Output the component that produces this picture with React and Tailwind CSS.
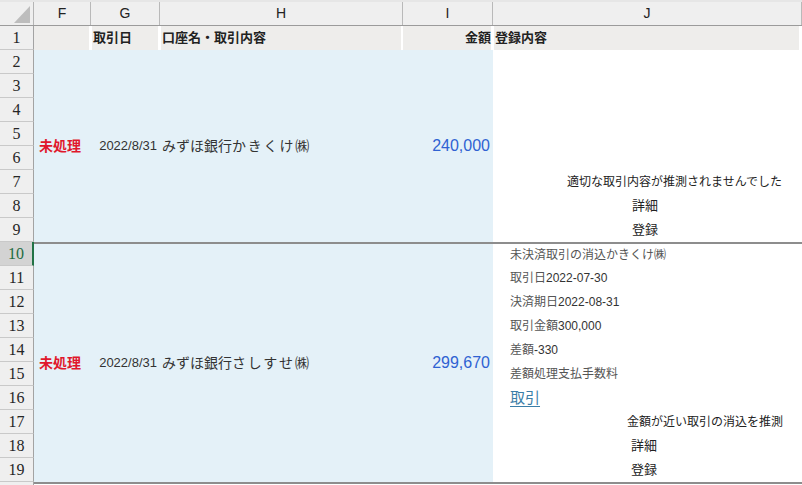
import React from 'react';

const sans = { fontFamily: '"Liberation Sans", "Noto Sans CJK JP", sans-serif' };
const serif = { fontFamily: '"Liberation Serif", "Noto Serif CJK JP", serif' };

const rowNums = Array.from({ length: 20 }, (_, i) => i + 1);

function RowHeader({ n }) {
    const active = n === 10;
    return (
        <div
            style={serif}
            className={
                "h-6 w-[34px] shrink-0 flex items-center justify-center border-b border-b-[#c9c9c9] text-[16px] leading-none " +
                (active
                    ? "bg-[#d3d3d3] text-[#1d6b41] border-r-2 border-r-[#217346]"
                    : "bg-[#efefef] text-[#262626] border-r border-r-[#a3a3a3]")
            }
        >
            {n < 20 ? n : ""}
        </div>
    );
}

function Record({ name, kana, amount, bordered, children }) {
    return (
        <div
            className={
                "flex " +
                (bordered ? "h-[242px] border-y-2 border-[#8d8d8d]" : "h-[192px]")
            }
        >
            <div className="flex w-[459px] bg-[#e4f1f8] items-center">
                <div className="w-[57px] pl-[5px] text-[14px] font-bold text-[#e0182c]">未処理</div>
                <div className="w-[69px] pr-[3px] text-right text-[13px] text-[#333]">2022/8/31</div>
                <div className="w-[243px] pl-[2px] text-[14px] text-[#333] whitespace-nowrap">
                    {name}
                    <span className="tracking-[1.8px]">{kana}</span>
                </div>
                <div className="w-[90px] pr-[3px] text-right text-[16px] text-[#2f62d2]">{amount}</div>
            </div>
            <div className="flex-1 flex flex-col">{children}</div>
        </div>
    );
}

function Line({ className = "", children }) {
    return <div className={"flex items-center whitespace-nowrap " + className}>{children}</div>;
}

export default function App() {
    return (
        <div style={sans} className="w-[802px] h-[485px] overflow-hidden bg-white">
            {/* column letters */}
            <div className="flex h-[26px] pt-[2px] bg-[#e6e6e6] border-b border-[#9b9b9b]">
                <div className="w-[34px] h-full bg-[#efefef] border-r border-[#b5b5b5] flex items-end justify-end pr-[3px] pb-[2px]">
                    <svg width="16" height="17" viewBox="0 0 16 17">
                        <polygon points="16,0 16,17 0,17" fill="#bdbdbd" />
                    </svg>
                </div>
                {[
                    ["F", "w-[57px]"],
                    ["G", "w-[69px]"],
                    ["H", "w-[243px]"],
                    ["I", "w-[90px]"],
                    ["J", "flex-1"],
                ].map(([c, w]) => (
                    <div
                        key={c}
                        className={w + " h-full bg-[#efefef] border-r border-[#b9b9b9] flex items-center justify-center text-[14px] text-[#222]"}
                    >
                        {c}
                    </div>
                ))}
            </div>

            <div className="flex">
                <div className="flex flex-col">
                    {rowNums.map(n => (
                        <RowHeader key={n} n={n} />
                    ))}
                </div>

                <div className="flex-1 flex flex-col">
                    {/* row 1 headings */}
                    <div className="flex h-6 text-[13px] font-bold text-[#222]">
                        <div className="w-[57px] pr-[2px]">
                            <div className="h-full bg-[#eeedeb]" />
                        </div>
                        <div className="w-[69px] pl-px pr-[2px]">
                            <div className="h-full bg-[#eeedeb] flex items-center pl-px">取引日</div>
                        </div>
                        <div className="w-[243px] pl-px pr-[2px]">
                            <div className="h-full bg-[#eeedeb] flex items-center pl-px">口座名・取引内容</div>
                        </div>
                        <div className="w-[90px] pr-[2px]">
                            <div className="h-full bg-[#eeedeb] flex items-center justify-end">金額</div>
                        </div>
                        <div className="flex-1 pl-px pr-[3px]">
                            <div className="h-full bg-[#eeedeb] flex items-center pl-px">登録内容</div>
                        </div>
                    </div>

                    <Record name="みずほ銀行" kana="かきくけ㈱" amount="240,000">
                        <div className="h-[120px]" />
                        <Line className="h-6 pl-[74px] text-[12px] text-[#222]">適切な取引内容が推測されませんでした</Line>
                        <Line className="h-6 pl-[139px] text-[13px] text-[#222]">詳細</Line>
                        <Line className="h-6 pl-[139px] text-[13px] text-[#222]">登録</Line>
                    </Record>

                    <Record name="みずほ銀行" kana="さしすせ㈱" amount="299,670" bordered>
                        <Line className="h-[22px] pl-[17px] text-[12px] text-[#555]">未決済取引の消込かきくけ㈱</Line>
                        <Line className="h-6 pl-[17px] text-[12px] text-[#555]">
                            取引日<span className="text-[#333]">2022-07-30</span>
                        </Line>
                        <Line className="h-6 pl-[17px] text-[12px] text-[#555]">
                            決済期日<span className="text-[#333]">2022-08-31</span>
                        </Line>
                        <Line className="h-6 pl-[17px] text-[12px] text-[#555]">
                            取引金額<span className="text-[#333]">300,000</span>
                        </Line>
                        <Line className="h-6 pl-[17px] text-[12px] text-[#555]">
                            差額<span className="text-[#333]">-330</span>
                        </Line>
                        <Line className="h-6 pl-[17px] text-[12px] text-[#555]">差額処理支払手数料</Line>
                        <Line className="h-6 pl-[17px] text-[15px] text-[#3b7ea8]">
                            <span className="underline underline-offset-[3px]">取引</span>
                        </Line>
                        <Line className="h-6 pl-[134px] text-[12px] text-[#222]">金額が近い取引の消込を推測</Line>
                        <Line className="h-6 pl-[138px] text-[13px] text-[#222]">詳細</Line>
                        <Line className="h-6 pl-[138px] text-[13px] text-[#222]">登録</Line>
                    </Record>
                </div>
            </div>
        </div>
    );
}
